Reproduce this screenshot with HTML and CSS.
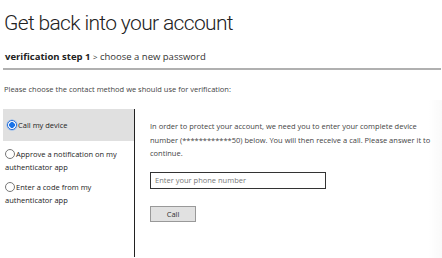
FILE: index.html
```html
<!DOCTYPE html>
<html>
<head>
<meta charset="utf-8">
<link rel="stylesheet" href="styles.css">
</head>
<body>
<div class="page">
  <h1 class="title">Get back into your account</h1>
  <div class="crumbs"><b>verification step 1</b> <span class="sep">&gt;</span> choose a new password</div>
  <div class="rule"></div>
  <p class="intro">Please choose the contact method we should use for verification:</p>
  <div class="panel">
    <div class="methods">
      <div class="method selected"><span class="radio on"></span>Call my device</div>
      <div class="method"><span class="radio"></span>Approve a notification on my authenticator app</div>
      <div class="method"><span class="radio"></span>Enter a code from my authenticator app</div>
    </div>
    <div class="detail">
      <p class="info">In order to protect your account, we need you to enter your complete device number (************50) below. You will then receive a call. Please answer it to continue.</p>
      <div class="input">Enter your phone number</div>
      <div class="button">Call</div>
    </div>
  </div>
  <div class="edge"></div>
</div>
</body>
</html>
```
FILE: styles.css
```css
html, body {
  margin: 0;
  padding: 0;
  background: #fff;
}
.page {
  width: 442px;
  height: 258px;
  overflow: hidden;
  font-family: "Open Sans", "Noto Sans", sans-serif;
  color: #333;
  position: relative;
}
.title {
  margin: 0;
  padding: 7px 0 0 4px;
  font-family: "Roboto", "Open Sans", sans-serif;
  font-size: 21px;
  font-weight: 300;
  line-height: 32px;
  letter-spacing: -0.65px;
  color: #222;
}
.crumbs {
  padding: 10px 0 0 5px;
  font-size: 9.5px;
  line-height: 15px;
  color: #333;
}
.crumbs b {
  font-weight: 700;
  font-size: 9.5px;
  color: #222;
}
.crumbs .sep {
  font-size: 8px;
}
.rule {
  margin: 4px 1px 0 3px;
  height: 2px;
  background: #b0b0b0;
}
.intro {
  margin: 0;
  padding: 13px 0 0 4px;
  font-size: 7.5px;
  line-height: 12px;
  color: #444;
}
.panel {
  display: flex;
  margin: 14px 0 0 3px;
  height: 148px;
}
.methods {
  width: 131px;
  border-right: 1px solid #222;
  font-size: 7.5px;
  line-height: 13px;
  color: #222;
}
.method {
  padding: 7px 2px 0 2px;
}
.method.selected {
  background: #e0e0e0;
  height: 32px;
  box-sizing: border-box;
  padding: 10px 2px 0 4px;
}
.radio {
  display: inline-block;
  width: 10px;
  height: 10px;
  border: 1px solid #777;
  border-radius: 50%;
  box-sizing: border-box;
  vertical-align: -2px;
  margin-right: 1px;
  background: #fff;
}
.radio.on {
  border-color: #2a6fd6;
  background: radial-gradient(circle, #1a73e8 0 2.6px, #fff 3.1px);
  box-shadow: 0 0 0 0.5px #7fb0f2;
}
.detail {
  padding: 11px 0 0 15px;
  width: 282px;
}
.info {
  margin: 0;
  font-size: 7.5px;
  line-height: 13.5px;
  color: #444;
}
.input {
  margin-top: 11px;
  width: 176px;
  height: 17px;
  box-sizing: border-box;
  border: 1px solid #333;
  font-size: 7.5px;
  line-height: 15px;
  padding-left: 4px;
  color: #777;
}
.button {
  margin-top: 17px;
  width: 46px;
  height: 16px;
  box-sizing: border-box;
  border: 1px solid #999;
  background: #e1e1e1;
  font-size: 7.5px;
  line-height: 14px;
  text-align: center;
  color: #333;
}
.edge {
  position: absolute;
  right: 0;
  top: 100px;
  bottom: 0;
  width: 14px;
  background: linear-gradient(to right, rgba(0,0,0,0), rgba(0,0,0,0.025));
}
```
